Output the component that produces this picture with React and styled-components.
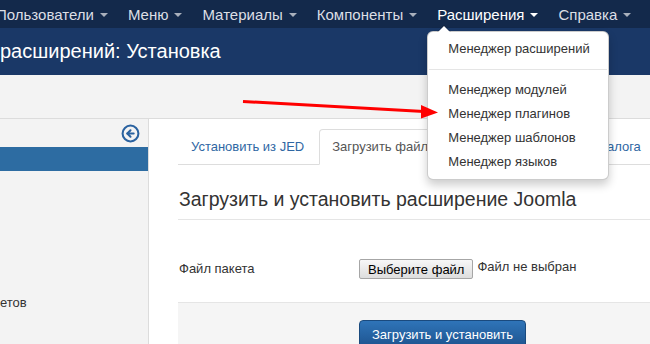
import styled, { createGlobalStyle } from "styled-components";
import { CircleArrowLeft } from "lucide-react";

const GlobalStyle = createGlobalStyle`
  html, body {
    margin: 0;
    padding: 0;
    background: #fff;
    overflow: hidden;
  }
  body {
    font-family: "Liberation Sans", Arial, sans-serif;
    color: #333;
  }
  * {
    box-sizing: border-box;
  }
`;

const navItems = [
  { title: "Пользователи" },
  { title: "Меню" },
  { title: "Материалы" },
  { title: "Компоненты" },
  { title: "Расширения", open: true },
  { title: "Справка" },
];

const menuItems = [
  "Менеджер модулей",
  "Менеджер плагинов",
  "Менеджер шаблонов",
  "Менеджер языков",
];

function App() {
  return (
    <Page>
      <GlobalStyle />
      <Navbar>
        {navItems.map((item) => (
          <NavItem key={item.title} $active={item.open}>
            {item.title}
            <Caret $active={item.open} />
            {item.open && (
              <Dropdown>
                <DropItem>Менеджер расширений</DropItem>
                <Divider />
                {menuItems.map((m) => (
                  <DropItem key={m}>{m}</DropItem>
                ))}
              </Dropdown>
            )}
          </NavItem>
        ))}
      </Navbar>
      <Header>
        <PageTitle>расширений: Установка</PageTitle>
      </Header>
      <Subhead />
      <Body>
        <Sidebar>
          <ToggleRow>
            <CircleArrowLeft size={19} strokeWidth={2.6} color="#2a62a0" />
          </ToggleRow>
          <SideItem $active />
          <SideItem />
          <SideItem />
          <SideItem />
          <SideItem />
          <SideItem />
          <SideItem>етов</SideItem>
        </Sidebar>
        <Main>
          <Tabs>
            <Tab>Установить из JED</Tab>
            <Tab $active>Загрузить файл пакета</Tab>
            <Tab>Установить из каталога</Tab>
          </Tabs>
          <Legend>Загрузить и установить расширение Joomla</Legend>
          <ControlGroup>
            <Label>Файл пакета</Label>
            <Controls>
              <FileButton>Выберите файл</FileButton>
              <FileName>Файл не выбран</FileName>
            </Controls>
          </ControlGroup>
          <FormActions>
            <PrimaryButton>Загрузить и установить</PrimaryButton>
          </FormActions>
        </Main>
      </Body>
      <Arrow width="650" height="344" viewBox="0 0 650 344">
        <line x1="243" y1="101.5" x2="424" y2="111.5" stroke="#ff0000" strokeWidth="3" />
        <polygon points="421,105 438,112.5 421,118.5" fill="#ff0000" />
      </Arrow>
    </Page>
  );
}

const Page = styled.div`
  position: relative;
  width: 650px;
  height: 344px;
  overflow: hidden;
`;

const Navbar = styled.div`
  height: 28px;
  background: #13294b;
  display: flex;
  align-items: stretch;
  & > div:first-child {
    margin-left: -14px;
  }
`;

const NavItem = styled.div`
  position: relative;
  display: flex;
  align-items: center;
  gap: 6px;
  padding: 0 10px;
  font-size: 15px;
  color: ${(p) => (p.$active ? "#fff" : "#dcdfe5")};
  white-space: nowrap;
`;

const Caret = styled.span`
  width: 0;
  height: 0;
  border-left: 4px solid transparent;
  border-right: 4px solid transparent;
  border-top: 4px solid ${(p) => (p.$active ? "#fff" : "#a9b0bc")};
  margin-top: 1px;
`;

const Dropdown = styled.div`
  position: absolute;
  top: 31px;
  left: 0;
  z-index: 10;
  width: 182px;
  padding: 5px 0;
  background: #fff;
  border: 1px solid rgba(0, 0, 0, 0.2);
  border-radius: 6px;
  box-shadow: 0 5px 10px rgba(0, 0, 0, 0.2);
  &::before {
    content: "";
    position: absolute;
    top: -7px;
    left: 9px;
    border-left: 7px solid transparent;
    border-right: 7px solid transparent;
    border-bottom: 7px solid rgba(0, 0, 0, 0.2);
  }
  &::after {
    content: "";
    position: absolute;
    top: -6px;
    left: 10px;
    border-left: 6px solid transparent;
    border-right: 6px solid transparent;
    border-bottom: 6px solid #fff;
  }
`;

const DropItem = styled.div`
  padding: 3px 20px;
  line-height: 18px;
  font-size: 13px;
  color: #333;
`;

const Divider = styled.div`
  height: 1px;
  margin: 8px 1px;
  background: #e5e5e5;
`;

const Header = styled.div`
  height: 47px;
  background: #1a3867;
  display: flex;
  align-items: center;
`;

const PageTitle = styled.h1`
  margin: 0;
  font-size: 20px;
  font-weight: normal;
  color: #fff;
`;

const Subhead = styled.div`
  height: 44px;
  background: #f3f3f3;
  border-bottom: 1px solid #dcdcdc;
`;

const Body = styled.div`
  display: flex;
  height: 225px;
`;

const Sidebar = styled.div`
  width: 149px;
  flex-shrink: 0;
  background: #f3f3f3;
  border-right: 1px solid #dcdcdc;
`;

const ToggleRow = styled.div`
  height: 28px;
  display: flex;
  justify-content: flex-end;
  align-items: center;
  padding-right: 8px;
`;

const SideItem = styled.div`
  height: 24px;
  line-height: 24px;
  font-size: 13px;
  color: #333;
  background: ${(p) => (p.$active ? "#2d6ca2" : "transparent")};
`;

const Main = styled.div`
  flex: 1;
  padding: 10px 0 0 29px;
  overflow: hidden;
`;

const Tabs = styled.div`
  display: flex;
  border-bottom: 1px solid #ddd;
  margin-bottom: 14px;
  white-space: nowrap;
`;

const Tab = styled.div`
  margin-right: 2px;
  margin-bottom: -1px;
  padding: 8px 12px;
  line-height: 18px;
  font-size: 13px;
  border: 1px solid ${(p) => (p.$active ? "#ddd" : "transparent")};
  border-bottom-color: ${(p) => (p.$active ? "#fff" : "transparent")};
  border-radius: 4px 4px 0 0;
  background: ${(p) => (p.$active ? "#fff" : "transparent")};
  color: ${(p) => (p.$active ? "#555" : "#2f67a3")};
`;

const Legend = styled.div`
  padding-left: 1px;
  line-height: 40px;
  font-size: 19.5px;
  color: #333;
  border-bottom: 1px solid #e5e5e5;
  white-space: nowrap;
`;

const ControlGroup = styled.div`
  display: flex;
  margin-top: 35px;
`;

const Label = styled.div`
  width: 181px;
  flex-shrink: 0;
  padding-top: 5px;
  padding-left: 1px;
  line-height: 18px;
  font-size: 13px;
  color: #333;
`;

const Controls = styled.div`
  display: flex;
  align-items: flex-start;
  gap: 4px;
  padding-top: 4px;
  white-space: nowrap;
`;

const FileButton = styled.div`
  height: 20px;
  padding: 0 8px;
  display: flex;
  align-items: center;
  font-size: 13px;
  color: #000;
  background: linear-gradient(#f7f7f7, #dddddd);
  border: 1px solid #a6a6a6;
  border-radius: 2px;
`;

const FileName = styled.span`
  line-height: 16px;
  font-size: 13px;
  color: #333;
`;

const FormActions = styled.div`
  margin-top: 23px;
  padding: 17px 0 20px 181px;
  background: #f5f5f5;
  border-top: 1px solid #e5e5e5;
  width: 600px;
`;

const PrimaryButton = styled.div`
  display: inline-block;
  padding: 5px 12px;
  line-height: 18px;
  font-size: 13px;
  color: #fff;
  background: linear-gradient(#2f74b8, #1c518c);
  border: 1px solid #1a4a7e;
  border-radius: 4px;
  white-space: nowrap;
`;

const Arrow = styled.svg`
  position: absolute;
  top: 0;
  left: 0;
  pointer-events: none;
  z-index: 20;
`;

export default App;
